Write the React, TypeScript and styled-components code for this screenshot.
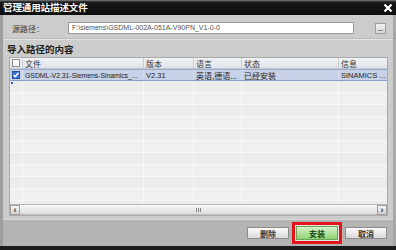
import React from 'react'
import styled, { createGlobalStyle } from 'styled-components'

const GlobalStyle = createGlobalStyle`
  html, body {
    margin: 0;
    padding: 0;
    background: #1c1c1c;
  }
  body {
    font-family: "Liberation Sans", "Noto Sans CJK SC", sans-serif;
  }
`

const CJK = `"Noto Sans CJK SC", "Liberation Sans", sans-serif`
const COLS = '13px 121px 50px 48px 97px 1fr'

interface Row {
  file: string
  version: string
  language: string
  state: string
  info: string
}

const rows: Row[] = [
  {
    file: 'GSDML-V2.31-Siemens-Sinamics_...',
    version: 'V2.31',
    language: '英语,德语...',
    state: '已经安装',
    info: 'SINAMICS ...',
  },
]

const CheckBox: React.FC<{ checked?: boolean }> = ({ checked }) => (
  <svg width="8" height="8" viewBox="0 0 8 8">
    <rect x="0.5" y="0.5" width="7" height="7" fill={checked ? '#3a76d6' : '#fbfbfb'} stroke={checked ? '#27509c' : '#8c8c8c'} />
    {checked && <path d="M1.6 4 L3.3 5.8 L6.5 1.8" fill="none" stroke="#fff" strokeWidth="1.4" />}
  </svg>
)

const App: React.FC = () => {
  const filler = Array.from({ length: 11 }, (_, i) => i)
  return (
    <>
      <GlobalStyle />
      <Dialog>
        <TitleBar>
          <Title>管理通用站描述文件</Title>
          <CloseButton>
            <svg width="10" height="10" viewBox="0 0 10 10">
              <path d="M1.5 1.5 L8.5 8.5 M8.5 1.5 L1.5 8.5" stroke="#fff" strokeWidth="2.2" />
            </svg>
          </CloseButton>
        </TitleBar>
        <Frame>
          <PathRow>
            <PathLabel>源路径：</PathLabel>
            <PathInput>F:\siemens\GSDML-002A-051A-V90PN_V1-0-0</PathInput>
            <BrowseButton><BrowseMark /></BrowseButton>
          </PathRow>
          <Divider />
          <SectionTitle>导入路径的内容</SectionTitle>
          <TablePanel>
            <HeaderRow>
              <HeaderCell><CheckBox /></HeaderCell>
              <HeaderCell>文件</HeaderCell>
              <HeaderCell>版本</HeaderCell>
              <HeaderCell>语言</HeaderCell>
              <HeaderCell>状态</HeaderCell>
              <HeaderCell>信息</HeaderCell>
            </HeaderRow>
            {rows.map((row) => (
              <DataRow key={row.file}>
                <DataCell><CheckBox checked /></DataCell>
                <DataCell $tight>{row.file}</DataCell>
                <DataCell>{row.version}</DataCell>
                <DataCell $cjk>{row.language}</DataCell>
                <DataCell $cjk>{row.state}</DataCell>
                <DataCell>{row.info}</DataCell>
              </DataRow>
            ))}
            <FocusDot />
            <EmptyArea>
              {filler.map((i) => (
                <EmptyRow key={i} $odd={i % 2 === 1}>
                  <EmptyCell />
                  <EmptyCell />
                  <EmptyCell />
                  <EmptyCell />
                  <EmptyCell />
                  <EmptyCell />
                </EmptyRow>
              ))}
            </EmptyArea>
            <ScrollBar>
              <ArrowButton>‹</ArrowButton>
              <ScrollThumb>
                <Grip />
              </ScrollThumb>
              <ArrowButton>›</ArrowButton>
            </ScrollBar>
          </TablePanel>
          <Footer>
            <DialogButton>删除</DialogButton>
            <Highlight>
              <DialogButton $primary>安装</DialogButton>
            </Highlight>
            <DialogButton>取消</DialogButton>
          </Footer>
        </Frame>
      </Dialog>
    </>
  )
}
export default App

const Dialog = styled.div`
  width: 396px;
  height: 250px;
  display: flex;
  flex-direction: column;
  background: #1c1c1c;
  overflow: hidden;
`
const TitleBar = styled.div`
  height: 15px;
  flex: 0 0 auto;
  display: flex;
  align-items: center;
  justify-content: space-between;
  padding: 0 2px 0 3px;
  background: linear-gradient(#9a9a9a 0, #3a3a3a 1px, #161616 3px, #0e0e0e 100%);
`
const Title = styled.span`
  font-family: ${CJK};
  font-size: 9.5px;
  font-weight: 700;
  color: #fff;
  letter-spacing: -0.1px;
  line-height: 15px;
`
const CloseButton = styled.span`
  display: flex;
  align-items: center;
  justify-content: center;
  width: 12px;
  height: 12px;
`
const Frame = styled.div`
  flex: 1;
  display: flex;
  flex-direction: column;
  background: #cccccc;
  border-left: 3px solid #9e9e9e;
  border-right: 3px solid #a6a6a6;
  margin-bottom: 4px;
  min-height: 0;
`
const PathRow = styled.div`
  display: flex;
  align-items: center;
  height: 14px;
  margin-top: 6px;
  padding-left: 9px;
`
const PathLabel = styled.span`
  width: 56px;
  font-family: ${CJK};
  font-size: 8px;
  color: #3a3a3a;
`
const PathInput = styled.div`
  width: 286px;
  height: 12px;
  box-sizing: border-box;
  background: #fff;
  border: 1px solid #9a9a9a;
  font-size: 7px;
  line-height: 10px;
  color: #505050;
  padding-left: 3px;
  white-space: nowrap;
  overflow: hidden;
`
const BrowseButton = styled.div`
  width: 11px;
  height: 11px;
  box-sizing: border-box;
  margin-left: 21px;
  border: 1px solid #9d9d9d;
  background: linear-gradient(#f2f2f2, #d6d6d6);
  display: flex;
  align-items: flex-end;
  justify-content: center;
  padding-bottom: 2px;
`
const BrowseMark = styled.span`
  width: 5px;
  height: 1px;
  background: #8a8a8a;
`
const Divider = styled.div`
  height: 1px;
  margin-top: 3px;
  background: #e4e4e4;
  border-top: 1px solid #bcbcbc;
`
const SectionTitle = styled.div`
  font-family: ${CJK};
  font-size: 9.5px;
  font-weight: 700;
  color: #1e1e1e;
  height: 14px;
  line-height: 14px;
  margin: 2px 0 1px 4px;
`
const TablePanel = styled.div`
  position: relative;
  height: 157px;
  flex: 0 0 auto;
  margin: 0 5px 0 6px;
  display: flex;
  flex-direction: column;
  border: 1px solid #aaaaaa;
  background: #efefef;
  overflow: hidden;
`
const HeaderRow = styled.div`
  display: grid;
  grid-template-columns: ${COLS};
  height: 10px;
  flex: 0 0 auto;
  background: linear-gradient(#f1f3f6, #dfe3e9);
  border-bottom: 1px solid #c2c7d0;
`
const HeaderCell = styled.div`
  display: flex;
  align-items: center;
  padding-left: 2px;
  font-family: ${CJK};
  font-size: 8px;
  color: #333;
  border-right: 1px solid #c9cdd4;
  overflow: hidden;
  &:last-child {
    border-right: none;
  }
`
const DataRow = styled.div`
  display: grid;
  grid-template-columns: ${COLS};
  height: 12px;
  flex: 0 0 auto;
  box-sizing: border-box;
  background: #c7d1e8;
  border-top: 1px solid #9aabd0;
  border-bottom: 1px solid #8d9fc8;
`
const DataCell = styled.div<{ $cjk?: boolean; $tight?: boolean }>`
  display: flex;
  align-items: center;
  padding-left: 2px;
  font-family: ${({ $cjk }) => ($cjk ? CJK : '"Liberation Sans", sans-serif')};
  font-size: ${({ $cjk, $tight }) => ($cjk ? '8px' : $tight ? '7px' : '7.5px')};
  letter-spacing: ${({ $tight }) => ($tight ? '-0.1px' : '0')};
  color: #252525;
  white-space: nowrap;
  overflow: hidden;
  border-right: 1px solid #d6dcea;
  &:last-child {
    border-right: none;
  }
`
const FocusDot = styled.span`
  position: absolute;
  left: 1px;
  top: 24px;
  width: 2px;
  height: 2px;
  background: #2f5fc4;
`
const EmptyArea = styled.div`
  flex: 1;
  min-height: 0;
  overflow: hidden;
`
const EmptyRow = styled.div<{ $odd: boolean }>`
  display: grid;
  grid-template-columns: ${COLS};
  height: 12px;
  box-sizing: border-box;
  background: ${({ $odd }) => ($odd ? '#f0f0f0' : '#ececec')};
  border-bottom: 1px solid #f7f7f7;
`
const EmptyCell = styled.div`
  border-right: 1px solid #f8f8f8;
  &:last-child {
    border-right: none;
  }
`
const ScrollBar = styled.div`
  height: 11px;
  flex: 0 0 auto;
  display: flex;
  align-items: stretch;
  box-sizing: border-box;
  border-top: 1px solid #b4b4b4;
  background: #e2e2e2;
`
const ArrowButton = styled.div`
  width: 10px;
  box-sizing: border-box;
  display: flex;
  align-items: center;
  justify-content: center;
  background: linear-gradient(#f6f6f6, #d2d2d2);
  border: 1px solid #9e9e9e;
  font-size: 9px;
  font-weight: 700;
  line-height: 1;
  color: #333;
`
const ScrollThumb = styled.div`
  flex: 1;
  display: flex;
  align-items: center;
  justify-content: center;
  background: linear-gradient(#f4f4f4, #dcdcdc);
  border-top: 1px solid #fff;
  border-bottom: 1px solid #c0c0c0;
`
const Grip = styled.span`
  width: 5px;
  height: 4px;
  background: repeating-linear-gradient(90deg, #888 0 1px, transparent 1px 2px);
`
const Footer = styled.div`
  flex: 1;
  margin-top: 3px;
  display: flex;
  align-items: center;
  justify-content: flex-end;
  gap: 3px;
  padding-right: 6px;
  background: #b4b4b4;
  border-top: 1px solid #d8d8d8;
`
const Highlight = styled.span`
  display: flex;
  padding: 1px;
  border: 3px solid #e3151b;
  background: #e6e6e6;
`
const DialogButton = styled.div<{ $primary?: boolean }>`
  width: 42px;
  height: ${({ $primary }) => ($primary ? '14px' : '12px')};
  box-sizing: border-box;
  display: flex;
  align-items: center;
  justify-content: center;
  font-family: ${CJK};
  font-size: 8px;
  font-weight: 700;
  color: ${({ $primary }) => ($primary ? '#1f4d14' : '#333')};
  border: 1px solid ${({ $primary }) => ($primary ? '#6aa25a' : '#8c8c8c')};
  background: ${({ $primary }) => ($primary
    ? 'linear-gradient(#d8f2c8, #8fd274)'
    : 'linear-gradient(#fafafa, #dadada)')};
`
